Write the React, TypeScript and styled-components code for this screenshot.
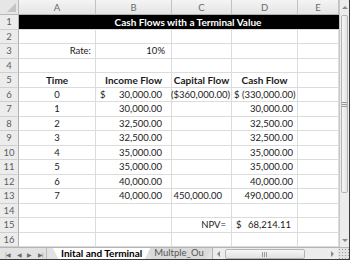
import { FC } from 'react';
import styled, { createGlobalStyle } from 'styled-components';

const GlobalStyle = createGlobalStyle`
  html, body {
    margin: 0;
    padding: 0;
    background: #ffffff;
  }
  body {
    font-family: Lato, "Open Sans", sans-serif;
  }
`;

const COLS = '19px 77px 76px 60px 66px 41px';

const Frame = styled.div`
  width: 350px;
  height: 260px;
  display: flex;
  flex-direction: column;
  overflow: hidden;
  box-sizing: border-box;
  border-right: 1px solid #3a3a3a;
  border-bottom: 1px solid #3a3a3a;
  background: #fff;
`;

const Body = styled.div`
  display: flex;
  height: 247px;
`;

const Sheet = styled.div`
  display: grid;
  grid-template-columns: ${COLS};
  grid-template-rows: 15px repeat(16, 14.5px);
  width: 339px;
`;

const Corner = styled.div`
  position: relative;
  background: #e6e6e6;
  border-right: 1px solid #b8b8b8;
  border-bottom: 1px solid #b8b8b8;
  box-sizing: border-box;
  &::after {
    content: '';
    position: absolute;
    right: 2px;
    bottom: 2px;
    border-left: 9px solid transparent;
    border-bottom: 9px solid #c4c4c4;
  }
`;

const ColHead = styled.div`
  display: flex;
  align-items: center;
  justify-content: center;
  background: linear-gradient(#f4f4f4, #e4e4e4);
  border-right: 1px solid #c2c2c2;
  border-bottom: 1px solid #b0b0b0;
  box-sizing: border-box;
  font-size: 9.5px;
  color: #6a6a6a;
`;

const RowHead = styled.div`
  display: flex;
  align-items: center;
  justify-content: center;
  background: #ececec;
  border-right: 1px solid #b0b0b0;
  border-bottom: 1px solid #cfcfcf;
  box-sizing: border-box;
  font-size: 9.5px;
  color: #5e5e5e;
`;

const Cell = styled.div<{ $align?: string; $bold?: boolean; $pr?: number; $pl?: number }>`
  display: flex;
  align-items: center;
  justify-content: ${(p) => p.$align || 'flex-start'};
  padding: 0 ${(p) => p.$pr ?? 3}px 0 ${(p) => p.$pl ?? 3}px;
  border-right: 1px solid #dcdcdc;
  border-bottom: 1px solid #dcdcdc;
  box-sizing: border-box;
  font-size: ${(p) => (p.$bold ? '10px' : '9.5px')};
  font-weight: ${(p) => (p.$bold ? 700 : 400)};
  color: #1a1a1a;
  white-space: nowrap;
  overflow: visible;
`;

const TitleCell = styled.div`
  grid-column: span 5;
  display: flex;
  align-items: center;
  justify-content: center;
  padding-left: 18px;
  background: #000;
  color: #fff;
  font-size: 10px;
  font-weight: 700;
  border-bottom: 1px solid #dcdcdc;
  box-sizing: border-box;
`;

const Money = styled.span`
  display: flex;
  justify-content: space-between;
  width: 100%;
`;

const VScroll = styled.div`
  width: 11px;
  display: flex;
  flex-direction: column;
  background: #ececec;
  border-left: 1px solid #c8c8c8;
`;

const Arrow = styled.div<{ $dir: 'up' | 'down' | 'left' | 'right' }>`
  display: flex;
  align-items: center;
  justify-content: center;
  flex: none;
  width: ${(p) => (p.$dir === 'up' || p.$dir === 'down' ? '100%' : '12px')};
  height: ${(p) => (p.$dir === 'up' || p.$dir === 'down' ? '14px' : '100%')};
  &::before {
    content: '';
    border: 3px solid transparent;
    ${(p) => (p.$dir === 'up' ? 'border-bottom-color: #8a8a8a; margin-top: -3px;' : '')}
    ${(p) => (p.$dir === 'down' ? 'border-top-color: #8a8a8a; margin-bottom: -3px;' : '')}
    ${(p) => (p.$dir === 'left' ? 'border-right-color: #8a8a8a; margin-left: -3px;' : '')}
    ${(p) => (p.$dir === 'right' ? 'border-left-color: #8a8a8a; margin-right: -3px;' : '')}
  }
`;

const VThumb = styled.div`
  height: 176px;
  margin: 1px 1px;
  background: linear-gradient(90deg, #f6f6f6, #e2e2e2);
  border: 1px solid #b4b4b4;
  border-radius: 2px;
  display: flex;
  align-items: center;
  justify-content: center;
  &::before {
    content: '';
    width: 5px;
    height: 5px;
    background: repeating-linear-gradient(#9a9a9a 0 1px, transparent 1px 2px);
  }
`;

const Track = styled.div`
  flex: 1;
`;

const TabBar = styled.div`
  flex: 1;
  display: flex;
  align-items: stretch;
  background: #e2e2e2;
  border-top: 1px solid #b4b4b4;
  font-size: 9.5px;
`;

const Nav = styled.div`
  width: 44px;
  display: flex;
  align-items: center;
  justify-content: space-around;
  padding-left: 2px;
  color: #6a6a6a;
  font-size: 6px;
  letter-spacing: -1px;
  border-right: 1px solid #bcbcbc;
`;

const Gap = styled.div`
  width: 6px;
`;

const Tab = styled.div<{ $active?: boolean }>`
  display: flex;
  align-items: center;
  padding: 0 8px 2px;
  line-height: 1;
  margin-left: ${(p) => (p.$active ? '0' : '-4px')};
  background: ${(p) => (p.$active ? '#ffffff' : '#dadada')};
  color: ${(p) => (p.$active ? '#000' : '#555')};
  font-weight: ${(p) => (p.$active ? 700 : 400)};
  font-size: ${(p) => (p.$active ? '10px' : '9.5px')};
  clip-path: polygon(0 0, 100% 0, calc(100% - 6px) 100%, 6px 100%);
  white-space: nowrap;
  overflow: hidden;
  z-index: ${(p) => (p.$active ? 2 : 1)};
`;

const HScroll = styled.div`
  flex: 1;
  display: flex;
  align-items: stretch;
  border-left: 1px solid #b4b4b4;
  background: #ececec;
`;

const HThumb = styled.div`
  width: 78px;
  margin: 1px 0;
  background: linear-gradient(#f6f6f6, #e2e2e2);
  border: 1px solid #b4b4b4;
  border-radius: 2px;
  display: flex;
  align-items: center;
  justify-content: center;
  &::before {
    content: '';
    width: 5px;
    height: 5px;
    background: repeating-linear-gradient(90deg, #9a9a9a 0 1px, transparent 1px 2px);
  }
`;

const Grip = styled.div`
  width: 11px;
  background: radial-gradient(circle, #999 0.7px, transparent 1px) 0 0 / 3px 3px;
`;

type CellDef = {
  v?: string;
  money?: [string, string];
  align?: string;
  bold?: boolean;
  pr?: number;
  pl?: number;
};

const E: CellDef = {};
const num = (v: string, pr = 9): CellDef => ({ v, align: 'flex-end', pr });
const mid = (v: string): CellDef => ({ v, align: 'center' });
const blank: CellDef[] = [E, E, E, E, E];

// rows 2..16 (row 1 is the merged title)
const rows: CellDef[][] = [
  blank,
  [num('Rate:', 4), num('10%', 6), E, E, E],
  blank,
  [
    { v: 'Time', align: 'center', bold: true },
    { v: 'Income Flow', align: 'center', bold: true },
    { v: 'Capital Flow', align: 'center', bold: true },
    { v: 'Cash Flow', align: 'center', bold: true },
    E,
  ],
  [
    mid('0'),
    { money: ['$', '30,000.00'], pl: 4, pr: 9 },
    { v: '($360,000.00)', align: 'flex-end', pr: 1 },
    { v: '$ (330,000.00)', pl: 2 },
    E,
  ],
  [mid('1'), num('30,000.00'), E, num('30,000.00', 4), E],
  [mid('2'), num('32,500.00'), E, num('32,500.00', 4), E],
  [mid('3'), num('32,500.00'), E, num('32,500.00', 4), E],
  [mid('4'), num('35,000.00'), E, num('35,000.00', 4), E],
  [mid('5'), num('35,000.00'), E, num('35,000.00', 4), E],
  [mid('6'), num('40,000.00'), E, num('40,000.00', 4), E],
  [mid('7'), num('40,000.00'), num('450,000.00', 9), num('490,000.00', 4), E],
  blank,
  [E, E, num('NPV=', 5), { money: ['$', '68,214.11'], pl: 4, pr: 6 }, E],
  blank,
];

const SheetCell: FC<{ c: CellDef }> = ({ c }) => (
  <Cell $align={c.align} $bold={c.bold} $pr={c.pr} $pl={c.pl}>
    {c.money ? (
      <Money>
        <span>{c.money[0]}</span>
        <span>{c.money[1]}</span>
      </Money>
    ) : (
      c.v
    )}
  </Cell>
);

const App: FC = () => {
  return (
    <>
      <GlobalStyle />
      <Frame>
        <Body>
          <Sheet>
            <Corner />
            {['A', 'B', 'C', 'D', 'E'].map((l) => (
              <ColHead key={l}>{l}</ColHead>
            ))}
            <RowHead>1</RowHead>
            <TitleCell>Cash Flows with a Terminal Value</TitleCell>
            {rows.map((r, i) => [
              <RowHead key={`h${i}`}>{i + 2}</RowHead>,
              r.map((c, j) => <SheetCell key={`${i}-${j}`} c={c} />),
            ])}
          </Sheet>
          <VScroll>
            <Arrow $dir="up" />
            <VThumb />
            <Track />
            <Arrow $dir="down" />
          </VScroll>
        </Body>
        <TabBar>
          <Nav>
            <span>|◀</span>
            <span>◀</span>
            <span>▶</span>
            <span>▶|</span>
          </Nav>
          <Gap />
          <Tab $active>Inital and Terminal</Tab>
          <Tab>Multple_Ou</Tab>
          <HScroll>
            <Arrow $dir="left" />
            <HThumb />
            <Track />
            <Arrow $dir="right" />
          </HScroll>
          <Grip />
        </TabBar>
      </Frame>
    </>
  );
};

export default App;
